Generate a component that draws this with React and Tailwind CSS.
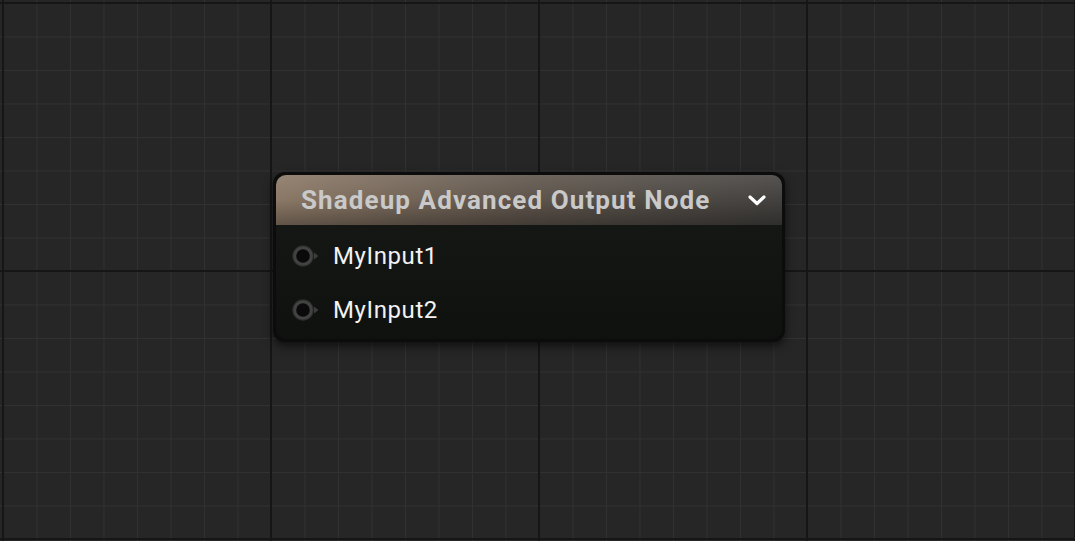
import React from 'react';

const Pin = () => (
  <svg width="34" height="24" viewBox="0 0 34 24" className="shrink-0">
    <circle cx="11" cy="12" r="10" fill="none" stroke="#2c2c2c" strokeWidth="1.5" />
    <circle cx="11" cy="12" r="8.3" fill="#0a0a0a" stroke="#424242" strokeWidth="3" />
    <path d="M22 8.5 L26.5 12 L22 15.5 Z" fill="#3c3c3c" />
  </svg>
);

const Row = ({ label }) => (
  <div className="flex items-center h-[54px] pl-[16px]">
    <Pin />
    <span className="ml-[7px] text-[24px] tracking-[0.6px] text-[#f2f2f2] leading-none">{label}</span>
  </div>
);

export default function App() {
  return (
    <div
      className="relative w-[1075px] h-[541px] overflow-hidden bg-[#262626] bg-[linear-gradient(to_right,#161616_2px,transparent_2px),linear-gradient(to_bottom,#161616_2px,transparent_2px),linear-gradient(to_right,#313131_1px,transparent_1px),linear-gradient(to_bottom,#313131_1px,transparent_1px)] [background-size:268px_268px,268px_268px,33.5px_33.5px,33.5px_33.5px] [background-position:2px_2px,2px_2px,3px_3px,3px_3px]"
      style={{ fontFamily: 'Roboto, "Noto Sans", sans-serif' }}
    >
      {/* graph node */}
      <div className="absolute left-[273px] top-[172px] w-[512px] rounded-[12px] bg-[#0b0c0b] p-[3px] shadow-[0_4px_10px_rgba(0,0,0,0.6)]">
        <div className="relative h-[50px] rounded-t-[10px] bg-gradient-to-r from-[#8b7866] via-[#5e544b] to-[#43413f] overflow-hidden">
          <div className="absolute inset-0 bg-gradient-to-b from-white/10 via-transparent to-black/30" />
          <div className="relative flex items-center h-full pl-[25px] pr-[14px]">
            <span className="flex-1 text-[26px] font-bold text-[#c9c9c9] leading-none tracking-[1.1px]">
              Shadeup Advanced Output Node
            </span>
            <svg width="22" height="22" viewBox="0 0 22 22">
              <path d="M4 8 L11 14.5 L18 8" fill="none" stroke="#ffffff" strokeWidth="3.2" strokeLinecap="round" strokeLinejoin="round" />
            </svg>
          </div>
        </div>
        <div className="rounded-b-[10px] bg-gradient-to-b from-[#151715] to-[#0f110f] pt-[4px] pb-[2px]">
          <Row label="MyInput1" />
          <Row label="MyInput2" />
        </div>
      </div>
    </div>
  );
}
